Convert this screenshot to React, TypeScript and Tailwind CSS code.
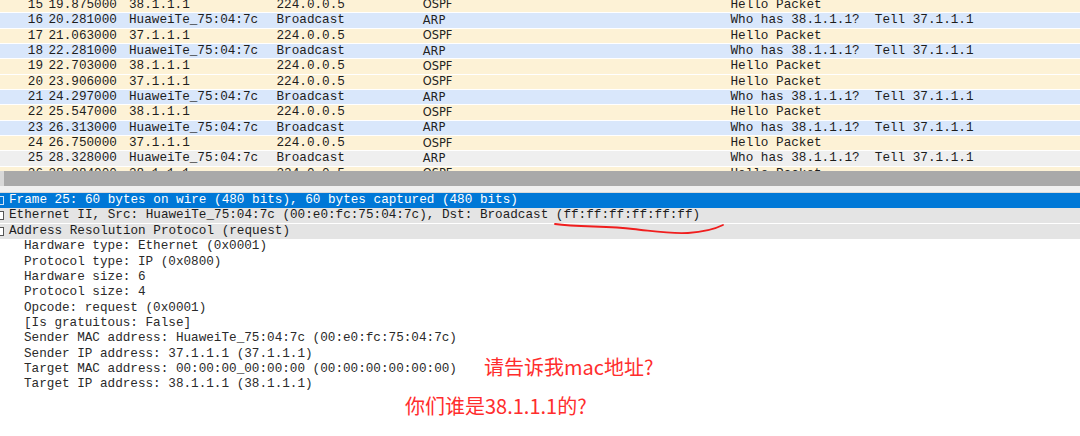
const packets = [
  { no: '15', time: '19.875000', src: '38.1.1.1', dst: '224.0.0.5', proto: 'OSPF', info: 'Hello Packet', kind: 'ospf' },
  { no: '16', time: '20.281000', src: 'HuaweiTe_75:04:7c', dst: 'Broadcast', proto: 'ARP', info: 'Who has 38.1.1.1?  Tell 37.1.1.1', kind: 'arp' },
  { no: '17', time: '21.063000', src: '37.1.1.1', dst: '224.0.0.5', proto: 'OSPF', info: 'Hello Packet', kind: 'ospf' },
  { no: '18', time: '22.281000', src: 'HuaweiTe_75:04:7c', dst: 'Broadcast', proto: 'ARP', info: 'Who has 38.1.1.1?  Tell 37.1.1.1', kind: 'arp' },
  { no: '19', time: '22.703000', src: '38.1.1.1', dst: '224.0.0.5', proto: 'OSPF', info: 'Hello Packet', kind: 'ospf' },
  { no: '20', time: '23.906000', src: '37.1.1.1', dst: '224.0.0.5', proto: 'OSPF', info: 'Hello Packet', kind: 'ospf' },
  { no: '21', time: '24.297000', src: 'HuaweiTe_75:04:7c', dst: 'Broadcast', proto: 'ARP', info: 'Who has 38.1.1.1?  Tell 37.1.1.1', kind: 'arp' },
  { no: '22', time: '25.547000', src: '38.1.1.1', dst: '224.0.0.5', proto: 'OSPF', info: 'Hello Packet', kind: 'ospf' },
  { no: '23', time: '26.313000', src: 'HuaweiTe_75:04:7c', dst: 'Broadcast', proto: 'ARP', info: 'Who has 38.1.1.1?  Tell 37.1.1.1', kind: 'arp' },
  { no: '24', time: '26.750000', src: '37.1.1.1', dst: '224.0.0.5', proto: 'OSPF', info: 'Hello Packet', kind: 'ospf' },
  { no: '25', time: '28.328000', src: 'HuaweiTe_75:04:7c', dst: 'Broadcast', proto: 'ARP', info: 'Who has 38.1.1.1?  Tell 37.1.1.1', kind: 'sel' },
  { no: '26', time: '28.984000', src: '38.1.1.1', dst: '224.0.0.5', proto: 'OSPF', info: 'Hello Packet', kind: 'ospf' },
];

const rowBg: Record<string, string> = {
  ospf: 'bg-[#fdf2d6]',
  arp: 'bg-[#d9e7fb]',
  sel: 'bg-[#efefef]',
};

const arpFields = [
  'Hardware type: Ethernet (0x0001)',
  'Protocol type: IP (0x0800)',
  'Hardware size: 6',
  'Protocol size: 4',
  'Opcode: request (0x0001)',
  '[Is gratuitous: False]',
  'Sender MAC address: HuaweiTe_75:04:7c (00:e0:fc:75:04:7c)',
  'Sender IP address: 37.1.1.1 (37.1.1.1)',
  'Target MAC address: 00:00:00_00:00:00 (00:00:00:00:00:00)',
  'Target IP address: 38.1.1.1 (38.1.1.1)',
];

const mono = "font-['Liberation_Mono',monospace] text-[12.67px]";

function Toggle({ light }: { light?: boolean }) {
  return (
    <span
      className={`-ml-[5px] mr-[5px] inline-block h-[9px] w-[9px] shrink-0 border ${
        light ? 'border-[#cfe3f7] bg-[#0078d7]' : 'border-[#555] bg-white'
      }`}
    />
  );
}

export default function App() {
  return (
    <div className="relative h-[436px] w-[1080px] overflow-hidden bg-white text-[#1d1d1d]">
      {/* Packet list */}
      <div className="h-[171px] overflow-hidden">
        <div className="-mt-[2px]">
          {packets.map((p) => (
            <div
              key={p.no}
              className={`flex h-[15.35px] items-center whitespace-pre border-b border-white leading-none ${rowBg[p.kind]}`}
            >
              <div className={`${mono} w-[43px] text-right`}>{p.no}</div>
              <div className={`${mono} ml-[5.5px] w-[80.5px]`}>{p.time}</div>
              <div className={`${mono} w-[147.5px]`}>{p.src}</div>
              <div className={`${mono} w-[146.3px]`}>{p.dst}</div>
              <div className="w-[307.7px] font-['DejaVu_Sans',sans-serif] text-[11.4px] text-[#222]">{p.proto}</div>
              <div className={mono}>{p.info}</div>
            </div>
          ))}
        </div>
      </div>

      {/* Horizontal scrollbar */}
      <div className="flex h-[15px] bg-[#a9a9a9]">
        <div className="w-[4px] bg-[#d8d8d8]" />
      </div>
      <div className="h-[6px] bg-[#f0f0f0]" />
      <div className="h-px bg-[#dadada]" />

      {/* Packet details */}
      <div className={`${mono} leading-none whitespace-pre`}>
        <div className="flex h-[15.35px] items-center bg-[#0078d7] text-white">
          <Toggle light />
          Frame 25: 60 bytes on wire (480 bits), 60 bytes captured (480 bits)
        </div>
        <div className="flex h-[15.35px] items-center border-b border-white bg-[#e4e4e4]">
          <Toggle />
          Ethernet II, Src: HuaweiTe_75:04:7c (00:e0:fc:75:04:7c), Dst: Broadcast (ff:ff:ff:ff:ff:ff)
        </div>
        <div className="flex h-[15.35px] items-center bg-[#e4e4e4]">
          <Toggle />
          Address Resolution Protocol (request)
        </div>
        {arpFields.map((f) => (
          <div key={f} className="flex h-[15.35px] items-center pl-[24px] text-[#2a2a2a]">
            {f}
          </div>
        ))}
      </div>

      {/* Red hand-drawn annotations */}
      <svg className="absolute left-[548px] top-[218px]" width="180" height="20" viewBox="0 0 180 20" fill="none">
        <path
          d="M7 6 C 30 9, 60 8, 85 11 C 105 13, 120 16, 140 15 C 155 14, 165 12, 175 7"
          stroke="#f01e1e"
          strokeWidth="1.8"
          strokeLinecap="round"
        />
      </svg>
      <div className="absolute left-[484px] top-[354px] font-['Noto_Sans_CJK_SC',sans-serif] text-[20px] leading-[26px] text-[#ff2d2d]">
        请告诉我mac地址?
      </div>
      <div className="absolute left-[405px] top-[393px] font-['Noto_Sans_CJK_SC',sans-serif] text-[20px] leading-[26px] text-[#ff2d2d]">
        你们谁是38.1.1.1的?
      </div>
    </div>
  );
}
